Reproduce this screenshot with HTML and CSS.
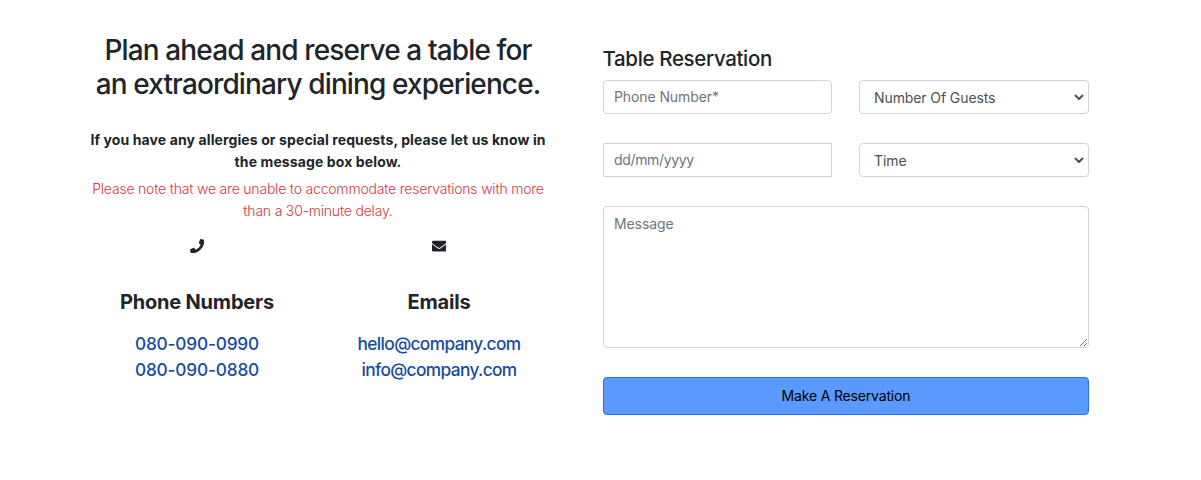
FILE: index.html
```html
<!DOCTYPE html>
<html lang="en">
<head>
<meta charset="utf-8">
<title>Table Reservation</title>
<link rel="stylesheet" href="styles.css">
</head>
<body>
<main class="reservation">
  <section class="intro">
    <h2 class="headline">Plan ahead and reserve a table for<br>an extraordinary dining experience.</h2>
    <p class="note">If you have any allergies or special requests, please let us know in<br>the message box below.</p>
    <p class="warning">Please note that we are unable to accommodate reservations with more<br>than a 30-minute delay.</p>
    <div class="contacts">
      <div class="contact">
        <svg class="icon" viewBox="0 0 512 512"><path fill="currentColor" d="M493.4 24.6l-104-24c-11.300-2.600-22.900 3.300-27.500 13.900l-48 112c-4.200 9.800-1.400 21.300 6.900 28l60.600 49.600c-36 76.700-98.900 140.500-177.200 177.200l-49.600-60.600c-6.800-8.300-18.200-11.100-28-6.900l-112 48C3.900 366.500-2 378.100.6 389.400l24 104C27.100 504.200 36.700 512 48 512c256.100 0 464-207.500 464-464 0-11.200-7.700-20.900-18.600-23.400z"/></svg>
        <h3 class="title">Phone Numbers</h3>
        <a class="link">080-090-0990</a>
        <a class="link">080-090-0880</a>
      </div>
      <div class="contact">
        <svg class="icon" viewBox="0 0 512 512"><path fill="currentColor" d="M502.300 190.800c3.900-3.100 9.700-.2 9.700 4.700V400c0 26.500-21.500 48-48 48H48c-26.500 0-48-21.500-48-48V195.600c0-5 5.700-7.800 9.700-4.700 22.400 17.400 52.100 39.500 154.100 113.600 21.100 15.400 56.700 47.800 92.200 47.600 35.700.3 72-32.800 92.300-47.600 102-74.100 131.600-96.300 154-113.700zM256 320c23.200.4 56.600-29.200 73.400-41.400 132.700-96.300 142.800-104.700 173.400-128.700 5.800-4.500 9.200-11.500 9.200-18.900v-19c0-26.500-21.500-48-48-48H48c-26.500 0-48 21.500-48 48v19c0 7.400 3.400 14.300 9.200 18.900 30.600 23.900 40.700 32.400 173.400 128.700 16.800 12.200 50.200 41.800 73.400 41.400z"/></svg>
        <h3 class="title">Emails</h3>
        <a class="link email">hello@company.com</a>
        <a class="link email">info@company.com</a>
      </div>
    </div>
  </section>
  <form class="form">
    <h4 class="form-title">Table Reservation</h4>
    <div class="fields">
      <input class="control" type="text" placeholder="Phone Number*">
      <div class="select"><span>Number Of Guests</span><svg class="chevron" viewBox="0 0 10 6"><path d="M1 1l4 4 4-4"/></svg></div>
      <input class="control date" type="text" placeholder="dd/mm/yyyy">
      <div class="select"><span>Time</span><svg class="chevron" viewBox="0 0 10 6"><path d="M1 1l4 4 4-4"/></svg></div>
      <textarea class="control message" placeholder="Message"></textarea>
      <button class="submit" type="button">Make A Reservation</button>
    </div>
  </form>
</main>
</body>
</html>
```
FILE: styles.css
```css
* { box-sizing: border-box; }
body {
  margin: 0;
  background: #fff;
  color: #212529;
  font-family: Inter, "Liberation Sans", sans-serif;
  font-size: 14px;
}
h2, h3, h4, p { margin: 0; }
.reservation {
  display: grid;
  grid-template-columns: 484px 486px;
  column-gap: 43px;
  padding-left: 76px;
}
.intro { padding-top: 33px; text-align: center; white-space: nowrap; }
.headline {
  font-size: 28px;
  font-weight: 500;
  line-height: 34px;
  letter-spacing: -0.87px;
}
.note {
  margin-top: 28px;
  font-weight: 700;
  line-height: 22px;
  letter-spacing: 0.11px;
}
.warning {
  margin-top: 5px;
  color: #dc3545;
  font-weight: 300;
  line-height: 22px;
  letter-spacing: -0.2px;
}
.contacts { display: grid; grid-template-columns: 1fr 1fr; margin-top: 17px; }
.contact { display: flex; flex-direction: column; align-items: center; }
.icon { width: 14.4px; height: 14.4px; }
.title {
  margin: 37px 0 17px;
  font-size: 20px;
  font-weight: 700;
  line-height: 24px;
  letter-spacing: -0.2px;
}
.link {
  color: #164ba5;
  font-size: 17.3px;
  font-weight: 500;
  line-height: 26px;
  letter-spacing: -0.2px;
}
.email { letter-spacing: -0.62px; }
.form { padding-top: 46px; }
.form-title {
  margin-bottom: 8px;
  font-size: 20.5px;
  font-weight: 500;
  line-height: 26px;
  letter-spacing: -0.35px;
  text-indent: -0.5px;
}
.fields {
  display: grid;
  grid-template-columns: 229px 230px;
  gap: 29px 27px;
}
.control, .select {
  width: 100%;
  height: 34px;
  border: 1px solid #ced4da;
  border-radius: 4px;
  background: #fff;
  font: 400 14px/22px Inter, "Liberation Sans", sans-serif;
  letter-spacing: -0.1px;
  color: #495057;
}
.control { padding: 4px 10px 6px; }
.control::placeholder { color: #6c757d; opacity: 1; }
.date { border-radius: 0; letter-spacing: -0.35px; }
.select {
  display: flex;
  justify-content: space-between;
  align-items: center;
  padding: 2px 4px 0 14px;
}
.chevron {
  width: 10px;
  height: 6px;
  margin-bottom: 2px;
  fill: none;
  stroke: #495057;
  stroke-width: 2;
}
.message { display: block; grid-column: 1 / -1; height: 142px; padding: 6px 10px; }
.submit {
  grid-column: 1 / -1;
  height: 38px;
  padding: 0;
  border: 1px solid #2e6df6;
  border-radius: 4px;
  background: #5a99fe;
  color: #000;
  font: 400 14px/22px Inter, "Liberation Sans", sans-serif;
  letter-spacing: -0.17px;
}
```
